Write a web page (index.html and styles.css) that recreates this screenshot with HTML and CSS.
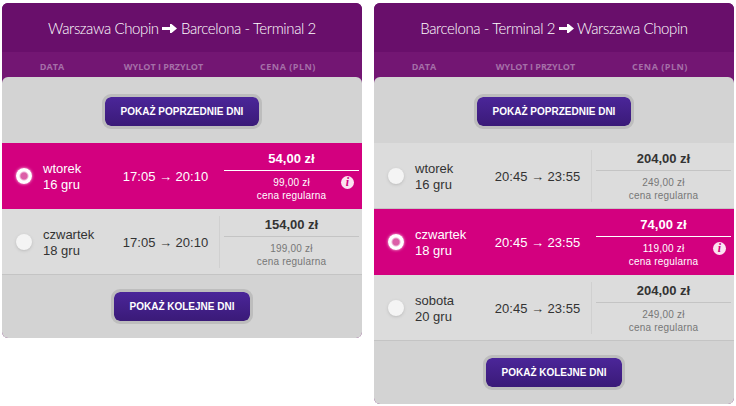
FILE: index.html
```html
<!DOCTYPE html>
<html lang="pl">
<head>
    <meta charset="UTF-8">
    <title>Wybór lotu</title>
    <link rel="stylesheet" href="styles.css">
</head>
<body>
    <div class="card">
        <div class="title">Warszawa Chopin <svg class="title-arrow" viewBox="0 0 15 11"><path d="M0 4h8V1l1.500 0 5.500 4.500L9.500 10H8V7H0z"/></svg> Barcelona - Terminal 2</div>
        <div class="columns"><span>DATA</span><span>WYLOT I PRZYLOT</span><span>CENA (PLN)</span></div>
        <div class="content">
            <div class="more more-top"><button class="btn">POKAŻ POPRZEDNIE DNI</button></div>
            <div class="row selected">
                <span class="radio"></span>
                <div class="day">wtorek<br>16 gru</div>
                <div class="hours">17:05 → 20:10</div>
                <div class="price">
                    <div class="price-now">54,00 zł</div>
                    <div class="price-old">99,00 zł<br>cena regularna</div>
                    <span class="info">i</span>
                </div>
            </div>
            <div class="row">
                <span class="radio"></span>
                <div class="day">czwartek<br>18 gru</div>
                <div class="hours">17:05 → 20:10</div>
                <div class="price">
                    <div class="price-now">154,00 zł</div>
                    <div class="price-old">199,00 zł<br>cena regularna</div>
                </div>
            </div>
            <div class="more"><button class="btn">POKAŻ KOLEJNE DNI</button></div>
        </div>
    </div>

    <div class="card">
        <div class="title">Barcelona - Terminal 2 <svg class="title-arrow" viewBox="0 0 15 11"><path d="M0 4h8V1l1.500 0 5.500 4.500L9.500 10H8V7H0z"/></svg> Warszawa Chopin</div>
        <div class="columns"><span>DATA</span><span>WYLOT I PRZYLOT</span><span>CENA (PLN)</span></div>
        <div class="content">
            <div class="more more-top"><button class="btn">POKAŻ POPRZEDNIE DNI</button></div>
            <div class="row">
                <span class="radio"></span>
                <div class="day">wtorek<br>16 gru</div>
                <div class="hours">20:45 → 23:55</div>
                <div class="price">
                    <div class="price-now">204,00 zł</div>
                    <div class="price-old">249,00 zł<br>cena regularna</div>
                </div>
            </div>
            <div class="row selected">
                <span class="radio"></span>
                <div class="day">czwartek<br>18 gru</div>
                <div class="hours">20:45 → 23:55</div>
                <div class="price">
                    <div class="price-now">74,00 zł</div>
                    <div class="price-old">119,00 zł<br>cena regularna</div>
                    <span class="info">i</span>
                </div>
            </div>
            <div class="row">
                <span class="radio"></span>
                <div class="day">sobota<br>20 gru</div>
                <div class="hours">20:45 → 23:55</div>
                <div class="price">
                    <div class="price-now">204,00 zł</div>
                    <div class="price-old">249,00 zł<br>cena regularna</div>
                </div>
            </div>
            <div class="more"><button class="btn">POKAŻ KOLEJNE DNI</button></div>
        </div>
    </div>
</body>
</html>
```

FILE: styles.css
```css
body {
    margin: 0;
    padding: 3px 2px;
    display: flex;
    align-items: flex-start;
    gap: 12px;
    background-color: #fff;
    font-family: "Liberation Sans", Arial, sans-serif;
    color: #333;
}
.card {
    width: 360px;
    border-radius: 6px;
    overflow: hidden;
    background-color: #731673;
}
.title {
    height: 49px;
    background-color: #690f6b;
    color: #fff;
    font-family: Lato, sans-serif;
    font-weight: 300;
    font-size: 15px;
    letter-spacing: -0.4px;
    line-height: 50px;
    text-align: center;
}
.title-arrow {
    width: 15px;
    height: 11px;
    fill: #fff;
}
.columns {
    height: 25px;
    display: grid;
    grid-template-columns: 100px 123px 126px;
    text-align: center;
    color: #a56fa8;
    font-family: "Open Sans", sans-serif;
    font-weight: 700;
    font-size: 9px;
    line-height: 29px;
}
.columns span:last-child {
    letter-spacing: 0.5px;
}
.content {
    background-color: #d3d3d3;
    border-radius: 6px 6px 0 0;
    padding-bottom: 14px;
}
.more {
    display: flex;
    justify-content: center;
    padding-top: 14px;
}
.more-top {
    padding-top: 17px;
    padding-bottom: 14px;
}
.btn {
    height: 35px;
    padding: 0 15.5px;
    border: 3px solid #bdbdbd;
    border-radius: 9px;
    background: linear-gradient(#4b2699, #3a1a78);
    background-clip: padding-box;
    color: #fff;
    font-family: "Liberation Sans", Arial, sans-serif;
    font-weight: 700;
    font-size: 10px;
    cursor: pointer;
}
.row {
    height: 65px;
    display: grid;
    grid-template-columns: 110px 107px 143px;
    align-items: center;
    border-bottom: 1px solid #c4c4c4;
    background-color: #dcdcdc;
    position: relative;
}
.row.selected {
    background-color: #d3007f;
    border-bottom-color: #d3007f;
    color: #fff;
}
.radio {
    position: absolute;
    left: 14px;
    top: 25px;
    width: 16px;
    height: 16px;
    border-radius: 50%;
    background-color: #f4f4f4;
    box-shadow: 0 1px 3px #bbb;
}
.selected .radio {
    background: radial-gradient(circle, #dc5fa8 0 3px, #fff 5px);
    box-shadow: 0 0 3px #ffd0e8;
}
.day {
    padding: 3px 0 0 41px;
    font-size: 13px;
    line-height: 16px;
}
.hours {
    padding-top: 2px;
    font-size: 13px;
    text-align: center;
}
.price {
    position: relative;
    align-self: stretch;
    margin: 7px 0 6px;
    padding: 0 3px 0 4px;
    border-left: 1px solid #d0d0d0;
    text-align: center;
}
.selected .price {
    border-left-color: #d3007f;
}
.price-now {
    height: 20px;
    border-bottom: 1px solid #c4c4c4;
    font-weight: 700;
    font-size: 13px;
    line-height: 18px;
}
.selected .price-now {
    border-bottom-color: #fff;
}
.price-old {
    padding-top: 5px;
    color: #777;
    font-size: 10px;
    letter-spacing: 0.2px;
    line-height: 13px;
}
.selected .price-old {
    color: #fff;
}
.info {
    position: absolute;
    right: 8px;
    top: 26px;
    width: 13px;
    height: 13px;
    border-radius: 50%;
    background-color: #fbe3f1;
    color: #d3007f;
    font-family: "Liberation Serif", serif;
    font-style: italic;
    font-weight: 700;
    font-size: 12px;
    line-height: 13px;
}
```
